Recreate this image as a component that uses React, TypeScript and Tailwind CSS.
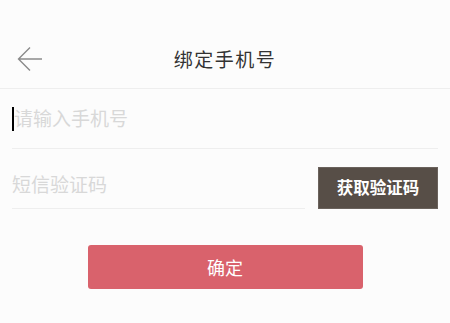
const font = { fontFamily: '"Noto Sans CJK SC", "Noto Sans", sans-serif' };

const BackArrow = () => (
  <svg width="26" height="26" viewBox="0 0 26 26" fill="none">
    <path d="M25 13H1.5M13 1.5L1.5 13L13 24.5" stroke="#8a8a8a" strokeWidth="1.4" />
  </svg>
);

export default function App() {
  return (
    <div className="w-[450px] h-[323px] bg-[#fcfcfc] overflow-hidden" style={font}>
      <div className="pt-[30px] h-[89px] border-b border-[#eeeeee] grid grid-cols-[1fr_auto_1fr] items-center">
        <div className="pl-[17px] flex items-center">
          <BackArrow />
        </div>
        <h1 className="text-[19px] text-[#333333] tracking-[1.5px]">绑定手机号</h1>
        <div />
      </div>

      <div className="px-3">
        <div className="h-[60px] border-b border-[#eeeeee] flex items-center">
          <span className="w-[2px] h-[24px] bg-black" />
          <span className="text-[19px] text-[#d8d8d8]">请输入手机号</span>
        </div>
        <div className="flex items-end gap-[13px] h-[60px]">
          <div className="flex-1 h-full border-b border-[#eeeeee] flex items-center pt-[12px]">
            <span className="text-[19px] text-[#d8d8d8]">短信验证码</span>
          </div>
          <button className="w-[120px] h-[42px] pb-[2px] bg-[#574e47] border border-[#6a625c] text-white text-[16.5px] font-semibold">
            获取验证码
          </button>
        </div>
      </div>

      <div className="flex justify-center pt-[36px]">
        <button className="w-[275px] h-[44px] rounded-[3px] bg-[#d9626c] text-white text-[18px]">
          确定
        </button>
      </div>
    </div>
  );
}
